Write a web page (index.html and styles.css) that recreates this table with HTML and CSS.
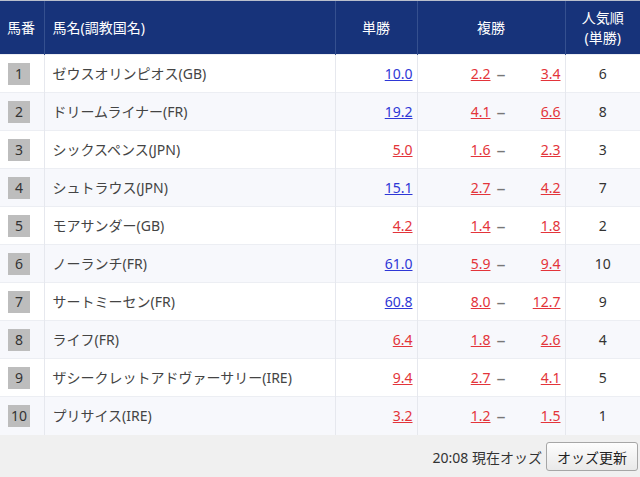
FILE: index.html
```html
<!DOCTYPE html>
<html lang="ja">
<head>
<meta charset="utf-8">
<link rel="stylesheet" href="styles.css">
</head>
<body>
<div class="wrap">
<table class="odds">
  <colgroup>
    <col class="c-num"><col class="c-name"><col class="c-win"><col class="c-place"><col class="c-pop">
  </colgroup>
  <thead>
    <tr>
      <th class="num">馬番</th>
      <th class="name">馬名(調教国名)</th>
      <th class="ctr">単勝</th>
      <th class="ctr">複勝</th>
      <th class="ctr pop">人気順<br>(単勝)</th>
    </tr>
  </thead>
  <tbody>
    <tr><td class="num"><span class="badge">1</span></td><td class="name">ゼウスオリンピオス(GB)</td><td class="win"><a class="blue">10.0</a></td><td class="place"><span class="pl"><a class="a red">2.2</a><span class="dash">–</span><a class="b red">3.4</a></span></td><td class="pop">6</td></tr>
    <tr><td class="num"><span class="badge">2</span></td><td class="name">ドリームライナー(FR)</td><td class="win"><a class="blue">19.2</a></td><td class="place"><span class="pl"><a class="a red">4.1</a><span class="dash">–</span><a class="b red">6.6</a></span></td><td class="pop">8</td></tr>
    <tr><td class="num"><span class="badge">3</span></td><td class="name">シックスペンス(JPN)</td><td class="win"><a class="red">5.0</a></td><td class="place"><span class="pl"><a class="a red">1.6</a><span class="dash">–</span><a class="b red">2.3</a></span></td><td class="pop">3</td></tr>
    <tr><td class="num"><span class="badge">4</span></td><td class="name">シュトラウス(JPN)</td><td class="win"><a class="blue">15.1</a></td><td class="place"><span class="pl"><a class="a red">2.7</a><span class="dash">–</span><a class="b red">4.2</a></span></td><td class="pop">7</td></tr>
    <tr><td class="num"><span class="badge">5</span></td><td class="name">モアサンダー(GB)</td><td class="win"><a class="red">4.2</a></td><td class="place"><span class="pl"><a class="a red">1.4</a><span class="dash">–</span><a class="b red">1.8</a></span></td><td class="pop">2</td></tr>
    <tr><td class="num"><span class="badge">6</span></td><td class="name">ノーランチ(FR)</td><td class="win"><a class="blue">61.0</a></td><td class="place"><span class="pl"><a class="a red">5.9</a><span class="dash">–</span><a class="b red">9.4</a></span></td><td class="pop">10</td></tr>
    <tr><td class="num"><span class="badge">7</span></td><td class="name">サートミーセン(FR)</td><td class="win"><a class="blue">60.8</a></td><td class="place"><span class="pl"><a class="a red">8.0</a><span class="dash">–</span><a class="b red">12.7</a></span></td><td class="pop">9</td></tr>
    <tr><td class="num"><span class="badge">8</span></td><td class="name">ライフ(FR)</td><td class="win"><a class="red">6.4</a></td><td class="place"><span class="pl"><a class="a red">1.8</a><span class="dash">–</span><a class="b red">2.6</a></span></td><td class="pop">4</td></tr>
    <tr><td class="num"><span class="badge">9</span></td><td class="name">ザシークレットアドヴァーサリー(IRE)</td><td class="win"><a class="red">9.4</a></td><td class="place"><span class="pl"><a class="a red">2.7</a><span class="dash">–</span><a class="b red">4.1</a></span></td><td class="pop">5</td></tr>
    <tr><td class="num"><span class="badge">10</span></td><td class="name">プリサイス(IRE)</td><td class="win"><a class="red">3.2</a></td><td class="place"><span class="pl"><a class="a red">1.2</a><span class="dash">–</span><a class="b red">1.5</a></span></td><td class="pop">1</td></tr>
  </tbody>
</table>
<div class="footer">
  <span class="stamp">20:08 現在オッズ</span>
  <button class="refresh" type="button">オッズ更新</button>
</div>
</div>
</body>
</html>
```

FILE: styles.css
```css
html, body {
  margin: 0;
  padding: 0;
  background: #f0f0f0;
}
body {
  font-family: "Noto Sans", "Noto Sans CJK JP", sans-serif;
  font-size: 14px;
  color: #333;
}
.wrap {
  width: 640px;
}
.odds {
  width: 640px;
  border-collapse: collapse;
  table-layout: fixed;
}
.c-num { width: 44px; }
.c-name { width: 291px; }
.c-win { width: 82px; }
.c-place { width: 148px; }
.c-pop { width: 75px; }

.odds thead tr {
  height: 54px;
}
.odds th {
  background: #17337a;
  color: #fff;
  font-weight: normal;
  line-height: 20px;
  padding: 0;
  border-left: 1px solid #35508f;
  border-top: 1px solid #b9bfcc;
  vertical-align: middle;
}
.odds th:first-child { border-left: none; }
.odds th.num { text-align: left; padding-left: 7px; }
.odds th.name { text-align: left; padding-left: 8px; }
.odds th.ctr { text-align: center; }
.odds th.pop { padding-top: 1px; }

.odds tbody tr {
  height: 38px;
  background: #fff;
}
.odds tbody tr:nth-child(even) {
  background: #f7f8fc;
}
.odds td {
  padding: 0;
  border-left: 1px solid #e6e8ee;
  border-top: 1px solid #eceef3;
  vertical-align: middle;
  line-height: 20px;
}
.odds td:first-child { border-left: none; }
.odds td.num { padding-left: 8px; }
.badge {
  display: inline-flex;
  width: 22px;
  height: 22px;
  align-items: center;
  justify-content: center;
  background: #bdbdbd;
  color: #333;
  vertical-align: middle;
}
.odds td.name { padding-left: 8px; color: #444; white-space: nowrap; }
.odds td.win { text-align: right; padding-right: 4px; }
.odds td.place { text-align: right; padding-right: 4px; }
.pl {
  display: inline-flex;
  align-items: center;
}
.pl .a, .pl .b {
  width: 40px;
  text-align: right;
}
.pl .dash {
  width: 30px;
  padding-left: 6px;
  box-sizing: border-box;
  color: #777;
  text-align: left;
  font-size: 18px;
  line-height: 20px;
}
.odds td.pop { text-align: center; }

a {
  text-decoration: underline;
  cursor: pointer;
}
a.blue { color: #2e37d6; }
a.red { color: #e3343a; }

.footer {
  display: flex;
  justify-content: flex-end;
  align-items: center;
  height: 44px;
  padding-right: 2px;
  gap: 4px;
}
.stamp {
  color: #333;
}
.refresh {
  width: 92px;
  height: 29px;
  font-family: "Noto Sans CJK JP", sans-serif;
  font-size: 14px;
  color: #222;
  background: linear-gradient(#fdfdfd, #e9e9e9);
  border: 1px solid #a6a6a6;
  border-radius: 3px;
  padding: 0;
}
```
